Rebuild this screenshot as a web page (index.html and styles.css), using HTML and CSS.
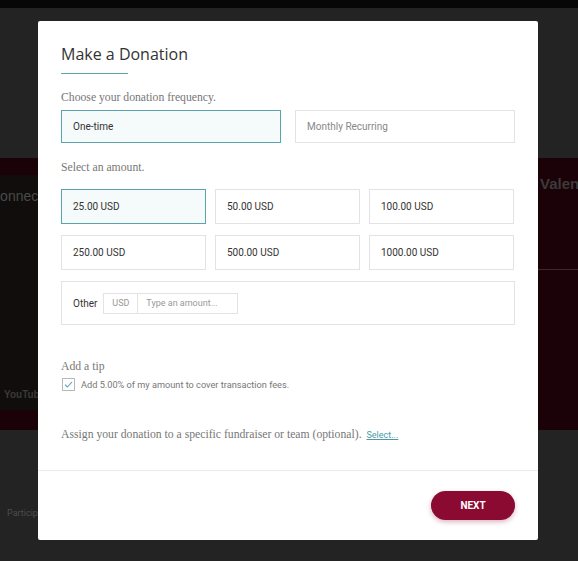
FILE: index.html
```html
<!DOCTYPE html>
<html lang="en">
<head>
	<meta charset="UTF-8">
	<title>Make a Donation</title>
	<link rel="stylesheet" href="styles.css">
</head>
<body>
	<div class="topbar"></div>
	<div class="page">
		<div class="page-head"></div>
		<div class="hero">
			<div class="video">
				<p class="video-title">Connect</p>
				<div class="video-bar"><span class="yt-logo"></span><span class="yt-text">YouTube</span></div>
			</div>
			<div class="hero-text">
				<h1>Valentine</h1>
				<hr>
			</div>
		</div>
		<div class="page-foot">
			<p>Participants</p>
		</div>
	</div>

	<div class="modal">
		<div class="modal-body">
			<h2 class="modal-title">Make a Donation</h2>
			<div class="title-rule"></div>

			<p class="label">Choose your donation frequency.</p>
			<div class="freq">
				<a href="javascript:;" class="opt on">One-time</a>
				<a href="javascript:;" class="opt muted">Monthly Recurring</a>
			</div>

			<p class="label">Select an amount.</p>
			<div class="amounts">
				<a href="javascript:;" class="opt on">25.00 USD</a>
				<a href="javascript:;" class="opt">50.00 USD</a>
				<a href="javascript:;" class="opt">100.00 USD</a>
				<a href="javascript:;" class="opt">250.00 USD</a>
				<a href="javascript:;" class="opt">500.00 USD</a>
				<a href="javascript:;" class="opt">1000.00 USD</a>
			</div>
			<div class="other">
				<span class="other-label">Other</span>
				<div class="input-group">
					<span class="addon">USD</span>
					<input type="text" placeholder="Type an amount...">
				</div>
			</div>

			<p class="label tip-label">Add a tip</p>
			<label class="check">
				<span class="box">
					<svg width="9" height="7" viewBox="0 0 9 7"><path d="M1 3.6 L3.4 6 L8 1" fill="none" stroke="#5ba3ad" stroke-width="1.1"/></svg>
				</span>
				Add 5.00% of my amount to cover transaction fees.
			</label>

			<p class="label assign">Assign your donation to a specific fundraiser or team (optional). <a href="javascript:;">Select...</a></p>
		</div>
		<div class="modal-foot">
			<a href="javascript:;" class="btn-next">NEXT</a>
		</div>
	</div>
</body>
</html>
```

FILE: styles.css
```css
body,div,p,h1,h2{margin:0;padding:0;}
body{background:#232323;height:561px;overflow:hidden;font-family:Roboto,"Liberation Sans",Arial,sans-serif;}
a{text-decoration:none;}

.topbar{height:8px;background:#070707;}
.page-head{height:150px;background:#232323;}
.hero{height:272px;background:#1b0208;display:flex;justify-content:space-between;}
.video{width:300px;margin:17px 0 20px -262px;background:#100d0c;display:flex;flex-direction:column;justify-content:space-between;}
.video-title{color:#4a4a4a;font:14px/1 "Liberation Sans",Arial,sans-serif;padding:14px 0 0 252px;}
.video-bar{display:flex;align-items:center;gap:2px;height:20px;padding:0 0 6px 264px;}
.yt-logo{width:12px;height:9px;border-radius:2px;background:#3a3a3a;}
.yt-text{color:#3a3a3a;font:bold 10px "Liberation Sans",Arial,sans-serif;}
.hero-text{width:40px;overflow:hidden;padding-top:18px;}
.hero-text h1{font:bold 15px/1 "Liberation Sans",Arial,sans-serif;color:#3b3b3b;white-space:nowrap;padding-left:2px;}
.hero-text hr{border:0;border-top:1px solid #3c2a30;margin:78px 0 0;}
.page-foot{padding:78px 0 0 7px;}
.page-foot p{color:#4d4d4d;font-size:9px;}

.modal{position:absolute;left:38px;top:21px;width:500px;height:519px;background:#fff;border-radius:2px;}
.modal-body{padding:22px 23px 0;}
.modal-title{font:16px/22px "Open Sans",Arial,sans-serif;color:#333;}
.title-rule{width:67px;height:1px;background:#5ba3ad;margin-top:8px;}

.label{font:11.7px/16px "Liberation Serif","Times New Roman",serif;color:#777;margin-top:16px;}
.freq{display:grid;grid-template-columns:1fr 1fr;gap:14px;margin-top:4px;}
.opt{display:flex;align-items:center;height:33px;padding:0 11px;border:1px solid #e3e3e3;box-sizing:border-box;color:#333;font-size:10px;background:#fff;}
.opt.on{border-color:#5ba3ad;background:#f5fafa;}
.opt.muted{color:#888;}

.freq + .label{margin-top:17px;}
.amounts{display:grid;grid-template-columns:repeat(3,1fr);column-gap:9px;row-gap:11px;margin-top:13px;width:453px;}
.amounts .opt{height:35px;}

.other{display:flex;align-items:center;gap:6px;height:44px;margin-top:11px;padding:0 11px;border:1px solid #e3e3e3;box-sizing:border-box;}
.other-label{font-size:10px;color:#333;}
.input-group{display:flex;height:21px;border:1px solid #e3e3e3;box-sizing:border-box;}
.addon{width:33px;border-right:1px solid #e3e3e3;color:#999;font-size:9px;display:flex;align-items:center;justify-content:center;}
.input-group input{width:99px;box-sizing:border-box;border:0;padding:0 8px;font:9px Roboto,Arial,sans-serif;outline:none;}
.input-group input::placeholder{color:#999;}

.tip-label{margin-top:34px;}
.check{display:flex;align-items:center;gap:6px;margin-top:3px;padding-left:1px;font-size:9.2px;color:#777;}
.box{width:13px;height:13px;border:1px solid #b8b8b8;box-sizing:border-box;display:flex;align-items:center;justify-content:center;}

.assign{margin-top:36px;}
.assign a{color:#4a9aa6;text-decoration:underline;font:9px Roboto,Arial,sans-serif;margin-left:2px;}

.modal-foot{position:absolute;left:0;right:0;bottom:0;height:70px;border-top:1px solid #ececec;display:flex;justify-content:flex-end;align-items:flex-start;padding:20px 23px 0;box-sizing:border-box;}
.btn-next{width:84px;height:29px;border-radius:15px;background:#8a0a32;color:#fff;font-weight:bold;font-size:10px;display:flex;align-items:center;justify-content:center;box-shadow:0 2px 5px rgba(138,10,50,.3);}
```
